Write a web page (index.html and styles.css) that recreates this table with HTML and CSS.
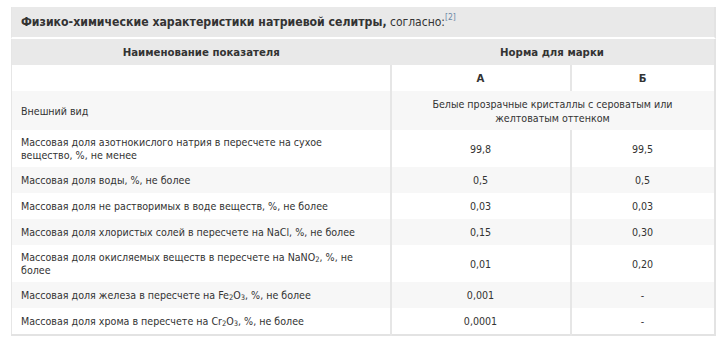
FILE: index.html
```html
<!DOCTYPE html>
<html lang="ru">
<head>
<meta charset="utf-8">
<link rel="stylesheet" href="styles.css">
</head>
<body>
<table class="spec">
  <caption class="spec-caption"><b>Физико-химические характеристики натриевой селитры,</b> согласно:<sup class="ref">[2]</sup></caption>
  <colgroup>
    <col class="c-name">
    <col class="c-a">
    <col class="c-b">
  </colgroup>
  <thead>
    <tr class="head">
      <th>Наименование показателя</th>
      <th colspan="2">Норма для марки</th>
    </tr>
    <tr class="sub">
      <th class="blank"></th>
      <th>А</th>
      <th>Б</th>
    </tr>
  </thead>
  <tbody>
    <tr class="odd">
      <td class="name">Внешний вид</td>
      <td class="val wide" colspan="2">Белые прозрачные кристаллы с сероватым или<br>желтоватым оттенком</td>
    </tr>
    <tr>
      <td class="name">Массовая доля азотнокислого натрия в пересчете на сухое вещество, %, не менее</td>
      <td class="val">99,8</td>
      <td class="val">99,5</td>
    </tr>
    <tr class="odd">
      <td class="name">Массовая доля воды, %, не более</td>
      <td class="val">0,5</td>
      <td class="val">0,5</td>
    </tr>
    <tr>
      <td class="name">Массовая доля не растворимых в воде веществ, %, не более</td>
      <td class="val">0,03</td>
      <td class="val">0,03</td>
    </tr>
    <tr class="odd">
      <td class="name">Массовая доля хлористых солей в пересчете на NaCl, %, не более</td>
      <td class="val">0,15</td>
      <td class="val">0,30</td>
    </tr>
    <tr>
      <td class="name">Массовая доля окисляемых веществ в пересчете на NaNO<sub>2</sub>, %, не более</td>
      <td class="val">0,01</td>
      <td class="val">0,20</td>
    </tr>
    <tr class="odd">
      <td class="name">Массовая доля железа в пересчете на Fe<sub>2</sub>O<sub>3</sub>, %, не более</td>
      <td class="val">0,001</td>
      <td class="val">-</td>
    </tr>
    <tr>
      <td class="name">Массовая доля хрома в пересчете на Cr<sub>2</sub>O<sub>3</sub>, %, не более</td>
      <td class="val">0,0001</td>
      <td class="val">-</td>
    </tr>
  </tbody>
</table>
</body>
</html>
```
FILE: styles.css
```css
html, body {
  margin: 0;
  padding: 0;
  background: #ffffff;
}

body {
  padding: 7px 10px 0 11px;
  font-family: "DejaVu Sans Condensed", "DejaVu Sans", sans-serif;
  font-size: 10.6px;
  color: #333333;
}

.spec {
  width: 703px;
  border-collapse: collapse;
  table-layout: fixed;
  border-left: 1px solid #e6e6e6;
  border-right: 2px solid #e3e3e3;
  border-bottom: 2px solid #e3e3e3;
}

.spec-caption {
  caption-side: top;
  text-align: left;
  background: #e9e9e9;
  border-bottom: 2px solid #ffffff;
  border-left: 1px solid #e6e6e6;
  border-right: 2px solid #e3e3e3;
  padding: 0 9px;
  height: 30px;
  line-height: 30px;
  font-size: 12px;
  color: #333333;
  white-space: nowrap;
}

.spec-caption b {
  font-family: "DejaVu Sans Condensed", "DejaVu Sans", sans-serif;
  font-size: 12.2px;
  font-weight: bold;
}

.ref {
  font-size: 8.5px;
  color: #6a87a6;
  line-height: 0;
  vertical-align: 6px;
}

.c-name { width: 379px; }
.c-a { width: 180px; }
.c-b { width: 144px; }

th {
  font-family: "DejaVu Sans", sans-serif;
  font-weight: bold;
  font-size: 10.2px;
  text-align: center;
  color: #333333;
}

.head th {
  background: #e9e9e9;
  height: 26px;
  padding: 0;
}

.sub th {
  background: #ffffff;
  height: 26px;
  padding: 0;
  border-left: 2px solid #e6e6e6;
}

.sub th.blank {
  border-left: none;
}

td {
  line-height: 13px;
  padding: 6px 8px 5px;
  vertical-align: middle;
}

td.name {
  padding-left: 9px;
  padding-right: 27px;
  text-align: left;
}

td.val {
  line-height: 15px;
  text-align: center;
  border-left: 2px solid #e6e6e6;
}

td.val.wide {
  line-height: 14px;
}

tr.odd td {
  background: #f7f7f7;
}

sub {
  font-size: 7.5px;
  line-height: 0;
  vertical-align: -1px;
}
```
